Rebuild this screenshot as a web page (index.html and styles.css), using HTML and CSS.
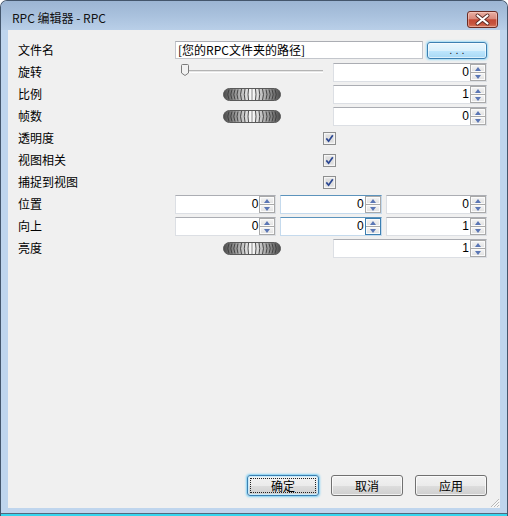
FILE: index.html
```html
<!DOCTYPE html>
<html lang="zh-CN">

<head>
    <meta charset="UTF-8" />
    <title>RPC 编辑器 - RPC</title>
    <link rel="stylesheet" href="styles.css">
</head>

<body>
    <svg width="0" height="0" class="defs">
        <defs>
            <linearGradient id="jogShade" x1="0" x2="1" y1="0" y2="0">
                <stop offset="0" stop-color="#4a4a4a" />
                <stop offset="0.22" stop-color="#9a9a9a" />
                <stop offset="0.5" stop-color="#ffffff" />
                <stop offset="0.78" stop-color="#9a9a9a" />
                <stop offset="1" stop-color="#4a4a4a" />
            </linearGradient>
            <symbol id="jog" viewBox="0 0 58 13">
                <rect x="0.5" y="0.5" width="57" height="12" rx="6" fill="url(#jogShade)" stroke="#5a5a5a" />
                <g fill="none" stroke="#3c3c3c" stroke-width="0.9">
                    <path d="M6 1.5 Q3.5 6.5 6 11.5" />
                    <path d="M9 1.5 Q6.5 6.5 9 11.5" />
                    <path d="M12 1.5 Q9.5 6.5 12 11.5" />
                    <path d="M15 1.5 Q13 6.5 15 11.5" />
                    <path d="M18.5 1 Q16.5 6.5 18.5 12" />
                    <path d="M22 1 Q20.5 6.5 22 12" />
                    <path d="M25.5 1 Q24.5 6.5 25.5 12" />
                    <path d="M29 1 L29 12" stroke="#777" />
                    <path d="M32.5 1 Q33.5 6.5 32.5 12" />
                    <path d="M36 1 Q37.5 6.5 36 12" />
                    <path d="M39.5 1 Q41.5 6.5 39.5 12" />
                    <path d="M43 1.5 Q45 6.5 43 11.5" />
                    <path d="M46 1.5 Q48.5 6.5 46 11.5" />
                    <path d="M49 1.5 Q51.5 6.5 49 11.5" />
                    <path d="M52 1.5 Q54.5 6.5 52 11.5" />
                </g>
            </symbol>
            <symbol id="check" viewBox="0 0 13 13">
                <rect x="0.5" y="0.5" width="12" height="12" fill="#f4f4f4" stroke="#8e8f8f" />
                <rect x="2" y="2" width="9" height="9" fill="#dedede" stroke="#f8f8f8" stroke-width="0.6" />
                <path d="M3.3 6.4 L5.6 9.2 L9.8 3.2" fill="none" stroke="#2c4893" stroke-width="1.7" />
            </symbol>
        </defs>
    </svg>

    <div class="window">
        <div class="titlebar">
            <span class="title">RPC 编辑器 - RPC</span>
            <button class="close-btn">
                <svg width="31" height="17" viewBox="0 0 31 17">
                    <path d="M10.5 4.5 L20.5 12.5 M20.5 4.5 L10.5 12.5" stroke="#5b2a24" stroke-width="4" stroke-linecap="round" />
                    <path d="M10.5 4.5 L20.5 12.5 M20.5 4.5 L10.5 12.5" stroke="#ffffff" stroke-width="2.2" stroke-linecap="round" />
                </svg>
            </button>
        </div>

        <div class="frame">
            <div class="client">
                <div class="form">
                    <div class="row">
                        <span class="label">文件名</span>
                        <div class="file-ctrl">
                            <div class="text-field">[您的RPC文件夹的路径]</div>
                            <button class="browse-btn">. . .</button>
                        </div>
                    </div>

                    <div class="row">
                        <span class="label">旋转</span>
                        <div class="split">
                            <div class="slider">
                                <div class="track"></div>
                                <svg class="thumb" width="8" height="12" viewBox="0 0 8 12">
                                    <path d="M1.5 0.5 H6.5 A1 1 0 0 1 7.5 1.5 V9 L4 11.5 L0.5 9 V1.5 A1 1 0 0 1 1.5 0.5 Z" fill="#f2f2f2" stroke="#7b7b7b" />
                                </svg>
                            </div>
                            <div class="spin-box">
                                <span class="num">0</span>
                                <span class="arrows"><i class="up"></i><i class="down"></i></span>
                            </div>
                        </div>
                    </div>

                    <div class="row">
                        <span class="label">比例</span>
                        <div class="split">
                            <svg class="jog" width="58" height="13"><use href="#jog" /></svg>
                            <div class="spin-box">
                                <span class="num">1</span>
                                <span class="arrows"><i class="up"></i><i class="down"></i></span>
                            </div>
                        </div>
                    </div>

                    <div class="row">
                        <span class="label">帧数</span>
                        <div class="split">
                            <svg class="jog" width="58" height="13"><use href="#jog" /></svg>
                            <div class="spin-box">
                                <span class="num">0</span>
                                <span class="arrows"><i class="up"></i><i class="down"></i></span>
                            </div>
                        </div>
                    </div>

                    <div class="row">
                        <span class="label">透明度</span>
                        <div class="check-cell"><svg width="13" height="13"><use href="#check" /></svg></div>
                    </div>

                    <div class="row">
                        <span class="label">视图相关</span>
                        <div class="check-cell"><svg width="13" height="13"><use href="#check" /></svg></div>
                    </div>

                    <div class="row">
                        <span class="label">捕捉到视图</span>
                        <div class="check-cell"><svg width="13" height="13"><use href="#check" /></svg></div>
                    </div>

                    <div class="row">
                        <span class="label">位置</span>
                        <div class="triple">
                            <div class="spin-box">
                                <span class="num">0</span>
                                <span class="arrows"><i class="up"></i><i class="down"></i></span>
                            </div>
                            <div class="spin-box hot">
                                <span class="num">0</span>
                                <span class="arrows"><i class="up"></i><i class="down"></i></span>
                            </div>
                            <div class="spin-box">
                                <span class="num">0</span>
                                <span class="arrows"><i class="up"></i><i class="down"></i></span>
                            </div>
                        </div>
                    </div>

                    <div class="row">
                        <span class="label">向上</span>
                        <div class="triple">
                            <div class="spin-box">
                                <span class="num">0</span>
                                <span class="arrows"><i class="up"></i><i class="down"></i></span>
                            </div>
                            <div class="spin-box hot">
                                <span class="num">0</span>
                                <span class="arrows hot"><i class="up"></i><i class="down"></i></span>
                            </div>
                            <div class="spin-box">
                                <span class="num">1</span>
                                <span class="arrows"><i class="up"></i><i class="down"></i></span>
                            </div>
                        </div>
                    </div>

                    <div class="row">
                        <span class="label">亮度</span>
                        <div class="split">
                            <svg class="jog" width="58" height="13"><use href="#jog" /></svg>
                            <div class="spin-box">
                                <span class="num">1</span>
                                <span class="arrows"><i class="up"></i><i class="down"></i></span>
                            </div>
                        </div>
                    </div>
                </div>

                <div class="actions">
                    <button class="btn default"><span>确定</span></button>
                    <button class="btn">取消</button>
                    <button class="btn">应用</button>
                </div>

                <svg class="grip" width="11" height="11" viewBox="0 0 11 11">
                    <path d="M10 2 L2 10 M10 5 L5 10 M10 8 L8 10" stroke="#b8b8b8" stroke-width="1" />
                    <path d="M10.5 3 L3 10.5 M10.5 6 L6 10.5 M10.5 9 L9 10.5" stroke="#ffffff" stroke-width="1" />
                </svg>
            </div>
        </div>
        <div class="frame-bottom"></div>
    </div>
</body>

</html>
```

FILE: styles.css
```css
* {
    margin: 0;
    padding: 0;
    box-sizing: border-box;
}

body {
    width: 508px;
    height: 516px;
    background: #ffffff;
    font-family: "Noto Sans CJK SC", "Liberation Sans", sans-serif;
    font-size: 12px;
    color: #000;
    overflow: hidden;
}

.defs {
    position: absolute;
}

.window {
    width: 508px;
    height: 516px;
    display: flex;
    flex-direction: column;
    border: 1px solid #44566c;
    border-bottom: none;
    border-radius: 7px 7px 0 0;
    background: #bfd5ed;
    overflow: hidden;
}

.titlebar {
    height: 29px;
    display: flex;
    align-items: center;
    justify-content: space-between;
    padding: 5px 9px 0 11px;
    background: linear-gradient(#9cb5d3, #a9c1dd 50%, #b9cfe8);
}

.title {
    font-size: 12px;
    line-height: 14px;
    color: #111;
}

.close-btn {
    width: 31px;
    height: 17px;
    border: 1px solid #6a2c24;
    border-radius: 3px;
    background: linear-gradient(#eab0a4, #d98a7c 45%, #c44a35 52%, #c6553f 80%, #d97a5e);
    box-shadow: inset 0 0 0 1px rgba(255, 220, 210, 0.45);
    display: flex;
    align-items: center;
    justify-content: center;
    margin-top: 2px;
}

.close-btn svg {
    display: block;
    margin: -1px;
}

.frame {
    flex: 1;
    padding: 0 7px;
    display: flex;
}

.frame-bottom {
    height: 8px;
    background: linear-gradient(#bfd5ed 0 5px, #53677d 5px 6px, #36d6ee 6px);
}

.client {
    flex: 1;
    position: relative;
    background: #f0f0f0;
    display: flex;
    flex-direction: column;
    padding: 9px 13px 12px 10px;
}

.row {
    height: 22px;
    display: grid;
    grid-template-columns: 157px 1fr;
    align-items: center;
}

.label {
    font-size: 12px;
    line-height: 14px;
}

/* file path + browse */
.file-ctrl {
    display: flex;
    gap: 4px;
    align-items: center;
}

.text-field {
    flex: 1;
    height: 18px;
    border: 1px solid #c3c6cc;
    border-top-color: #abadb3;
    background: #fff;
    padding-left: 2px;
    font-size: 12px;
    line-height: 16px;
    white-space: nowrap;
}

.browse-btn {
    width: 60px;
    height: 17px;
    border: 1px solid #3c7fb1;
    border-radius: 3px;
    background: linear-gradient(#eaf6fd, #d9f0fc 50%, #bee6fd 52%, #a7d9f5);
    box-shadow: 0 0 2px 1px #9fdcf7, inset 0 0 0 1px rgba(255, 255, 255, 0.6);
    font-family: "Liberation Sans", sans-serif;
    font-size: 11px;
    line-height: 12px;
    color: #222;
}

/* two halves: widget + spin */
.split {
    display: grid;
    grid-template-columns: 1fr 1fr;
    gap: 4px;
    align-items: center;
}

.triple {
    display: grid;
    grid-template-columns: 1fr 1fr 1fr;
    gap: 4px;
    align-items: center;
}

.jog {
    display: block;
    justify-self: center;
}

.slider {
    position: relative;
    height: 22px;
}

.track {
    margin: 9px 6px 0 6px;
    height: 3px;
    border-top: 1px solid #b4b4b4;
    border-bottom: 1px solid #ffffff;
    background: #e6e6e6;
}

.thumb {
    position: absolute;
    left: 6px;
    top: 3px;
}

.spin-box {
    height: 19px;
    display: flex;
    border: 1px solid #dcdfe4;
    border-top-color: #abadb3;
    background: #fff;
}

.spin-box.hot {
    border-color: #c5daed;
    border-top-color: #5c93bc;
}

.num {
    flex: 1;
    text-align: right;
    padding-right: 1px;
    font-family: "Liberation Sans", sans-serif;
    font-size: 12px;
    line-height: 17px;
}

.arrows {
    width: 16px;
    display: flex;
    flex-direction: column;
    border: 1px solid #a9a9a9;
    background: #a9a9a9;
    gap: 1px;
}

.arrows i {
    flex: 1;
    position: relative;
    background: linear-gradient(#f5f5f5, #e0e0e0);
    box-shadow: inset 0 0 0 1px #fbfbfb;
}

.arrows.hot {
    border-color: #3c7fb1;
}

.arrows i::after {
    content: "";
    position: absolute;
    left: 4px;
    top: 2px;
    border-left: 3.5px solid transparent;
    border-right: 3.5px solid transparent;
}

.arrows .up::after {
    border-bottom: 4px solid #5a76b5;
}

.arrows .down::after {
    border-top: 4px solid #5a76b5;
}

.check-cell {
    display: flex;
    justify-content: center;
    padding-right: 3px;
}

.check-cell svg {
    display: block;
}

/* dialog buttons */
.actions {
    margin-top: auto;
    display: flex;
    justify-content: flex-end;
    gap: 12px;
}

.btn {
    width: 72px;
    height: 21px;
    border: 1px solid #707070;
    border-radius: 3px;
    background: linear-gradient(#f2f2f2, #ebebeb 50%, #dddddd 52%, #cfcfcf);
    box-shadow: inset 0 0 0 1px rgba(255, 255, 255, 0.7);
    font-family: "Noto Sans CJK SC", sans-serif;
    font-size: 12px;
    line-height: 14px;
    color: #000;
}

.btn.default {
    border-color: #3c7fb1;
    box-shadow: 0 0 2px 1px #7fd0f5, inset 0 0 0 1px #c7ecfc;
    padding: 2px;
}

.btn.default span {
    display: block;
    height: 100%;
    border: 1px dotted #222;
    line-height: 13px;
}

.grip {
    position: absolute;
    right: 0;
    bottom: 0;
}
```
